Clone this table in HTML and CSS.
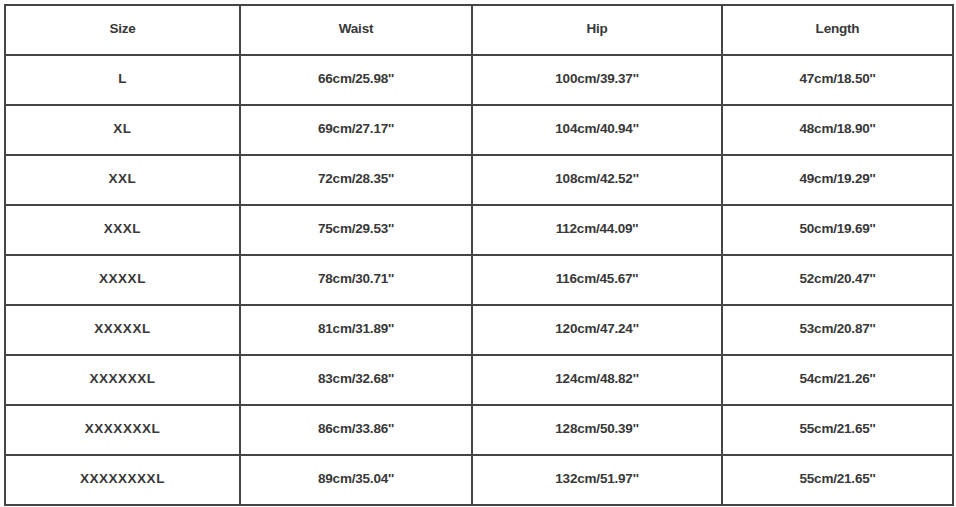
FILE: index.html
```html
<!DOCTYPE html>
<html>
<head>
<meta charset="utf-8">
<link rel="stylesheet" href="styles.css">
</head>
<body>
<div class="chart">
  <div class="cell">Size</div><div class="cell">Waist</div><div class="cell">Hip</div><div class="cell">Length</div>
  <div class="cell size">L</div><div class="cell">66cm/25.98''</div><div class="cell">100cm/39.37''</div><div class="cell">47cm/18.50''</div>
  <div class="cell size">XL</div><div class="cell">69cm/27.17''</div><div class="cell">104cm/40.94''</div><div class="cell">48cm/18.90''</div>
  <div class="cell size">XXL</div><div class="cell">72cm/28.35''</div><div class="cell">108cm/42.52''</div><div class="cell">49cm/19.29''</div>
  <div class="cell size">XXXL</div><div class="cell">75cm/29.53''</div><div class="cell">112cm/44.09''</div><div class="cell">50cm/19.69''</div>
  <div class="cell size">XXXXL</div><div class="cell">78cm/30.71''</div><div class="cell">116cm/45.67''</div><div class="cell">52cm/20.47''</div>
  <div class="cell size">XXXXXL</div><div class="cell">81cm/31.89''</div><div class="cell">120cm/47.24''</div><div class="cell">53cm/20.87''</div>
  <div class="cell size">XXXXXXL</div><div class="cell">83cm/32.68''</div><div class="cell">124cm/48.82''</div><div class="cell">54cm/21.26''</div>
  <div class="cell size">XXXXXXXL</div><div class="cell">86cm/33.86''</div><div class="cell">128cm/50.39''</div><div class="cell">55cm/21.65''</div>
  <div class="cell size">XXXXXXXXL</div><div class="cell">89cm/35.04''</div><div class="cell">132cm/51.97''</div><div class="cell">55cm/21.65''</div>
</div>
</body>
</html>
```
FILE: styles.css
```css
html, body {
  margin: 0;
  padding: 0;
  background: #ffffff;
}
body {
  padding: 4px;
  font-family: "Liberation Sans", Arial, sans-serif;
}
.chart {
  display: grid;
  grid-template-columns: 235px 232px 250px 231px;
  grid-auto-rows: 50px;
  width: max-content;
  border-left: 2px solid #454545;
  border-top: 2px solid #454545;
}
.cell {
  box-sizing: border-box;
  border-right: 2px solid #454545;
  border-bottom: 2px solid #454545;
  display: flex;
  align-items: center;
  justify-content: center;
  padding-bottom: 4px;
  font-size: 13.5px;
  font-weight: bold;
  color: #383838;
  letter-spacing: -0.2px;
}
.size {
  letter-spacing: 0.5px;
}
```
